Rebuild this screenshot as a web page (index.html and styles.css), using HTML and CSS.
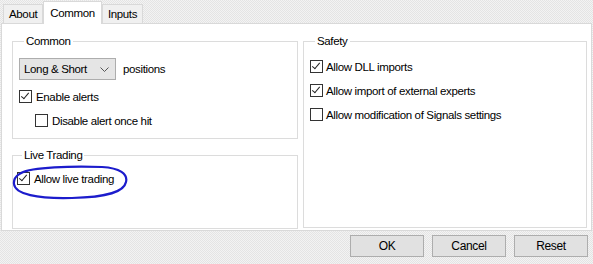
FILE: index.html
```html
<!DOCTYPE html>
<html lang="en">

<head>
    <meta charset="UTF-8">
    <title>Expert properties</title>
    <link rel="stylesheet" href="styles.css">
</head>

<body>
    <div class="tabs">
        <div class="tab">About</div>
        <div class="tab valgt">Common</div>
        <div class="tab">Inputs</div>
    </div>

    <section class="panel">
        <div class="venstre">
            <fieldset class="gruppe common">
                <legend>Common</legend>
                <div class="linje">
                    <div class="dropdown">
                        <span>Long &amp; Short</span>
                        <svg width="9" height="5" viewBox="0 0 9 5"><path d="M0.5 0.5 L4.5 4.5 L8.5 0.5" fill="none" stroke="#555" stroke-width="1"/></svg>
                    </div>
                    <span class="tekst">positions</span>
                </div>
                <label class="check"><span class="boks tjek"></span>Enable alerts</label>
                <label class="check indrykket"><span class="boks"></span>Disable alert once hit</label>
            </fieldset>

            <fieldset class="gruppe live">
                <legend>Live Trading</legend>
                <label class="check"><span class="boks tjek"></span>Allow live trading</label>
                <!-- blå cirkel tegnet ovenpå -->
                <svg class="cirkel" width="118" height="36" viewBox="0 0 118 36">
                    <path d="M9 9 C20 3 60 2 90 3 C108 4 116 10 114 18 C112 28 96 33 60 34 C25 35 3 30 2 20 C1 12 10 7 24 5" fill="none" stroke="#1c1ccc" stroke-width="2.2" stroke-linecap="round"/>
                </svg>
            </fieldset>
        </div>

        <fieldset class="gruppe safety">
            <legend>Safety</legend>
            <label class="check"><span class="boks tjek"></span>Allow DLL imports</label>
            <label class="check"><span class="boks tjek"></span>Allow import of external experts</label>
            <label class="check"><span class="boks"></span>Allow modification of Signals settings</label>
        </fieldset>
    </section>

    <div class="knapper">
        <button>OK</button>
        <button>Cancel</button>
        <button>Reset</button>
    </div>
</body>

</html>
```

FILE: styles.css
```css
* {
    margin: 0;
    padding: 0;
    box-sizing: border-box;
}

body {
    width: 593px;
    height: 264px;
    overflow: hidden;
    font-family: "Liberation Sans", Arial, sans-serif;
    font-size: 11.5px;
    letter-spacing: -0.35px;
    color: #000;
    background: repeating-conic-gradient(#f3f3f3 0 25%, #e4e4e4 0 50%) 0 0 / 2px 2px;
}

/*-------- TABS --------*/
.tabs {
    display: flex;
    align-items: flex-end;
    height: 23px;
    padding-left: 3px;
}

.tab {
    height: 19px;
    padding: 0 5px;
    line-height: 18px;
    background: #f0f0f0;
    border: 1px solid #d9d9d9;
    border-bottom: none;
}

.tab.valgt {
    height: 23px;
    padding: 0 6px;
    line-height: 22px;
    background: white;
    margin-bottom: -1px;
    position: relative;
}

/*-------- PANEL --------*/
.panel {
    display: grid;
    grid-template-columns: 286px 284px;
    column-gap: 5px;
    width: 591px;
    height: 208px;
    margin-left: 1px;
    padding: 11px 0 0 10px;
    background: white;
    border: 1px solid #d9d9d9;
}

.venstre {
    display: flex;
    flex-direction: column;
    gap: 10px;
}

.gruppe {
    border: 1px solid #dcdcdc;
    padding: 0 6px;
    min-width: 0;
}

.gruppe legend {
    margin-left: 5px;
    padding: 0 2px;
    line-height: 13px;
}

.common {
    height: 104px;
    padding-top: 10px;
}

.live {
    position: relative;
    height: 80px;
    padding: 10px 4px 0;
}

.safety {
    height: 193px;
    padding-top: 12px;
    margin-right: 0;
}

.linje {
    display: flex;
    align-items: center;
    gap: 7px;
    margin-bottom: 10px;
}

.dropdown {
    display: flex;
    align-items: center;
    justify-content: space-between;
    width: 97px;
    height: 22px;
    padding: 0 6px 0 4px;
    background: #e5e5e5;
    border: 1px solid #adadad;
}

.check {
    display: flex;
    align-items: center;
    gap: 4px;
    height: 13px;
    margin-bottom: 11px;
}

.safety .check {
    gap: 3px;
}

.indrykket {
    padding-left: 16px;
}

.boks {
    width: 13px;
    height: 13px;
    flex: none;
    background: white;
    border: 1px solid #333;
    position: relative;
}

.tjek::after {
    content: "";
    position: absolute;
    left: 3px;
    top: 0px;
    width: 3px;
    height: 7px;
    border: solid #222;
    border-width: 0 1px 1px 0;
    transform: rotate(40deg);
    transform-origin: 50% 50%;
}

.cirkel {
    position: absolute;
    left: -1px;
    top: 2px;
}

/*-------- KNAPPER --------*/
.knapper {
    display: flex;
    justify-content: flex-end;
    gap: 8px;
    padding: 4px 5px 0 0;
}

button {
    width: 74px;
    height: 22px;
    font-family: inherit;
    font-size: 12px;
    letter-spacing: -0.35px;
    background: #e1e1e1;
    border: 1px solid #adadad;
}
```
